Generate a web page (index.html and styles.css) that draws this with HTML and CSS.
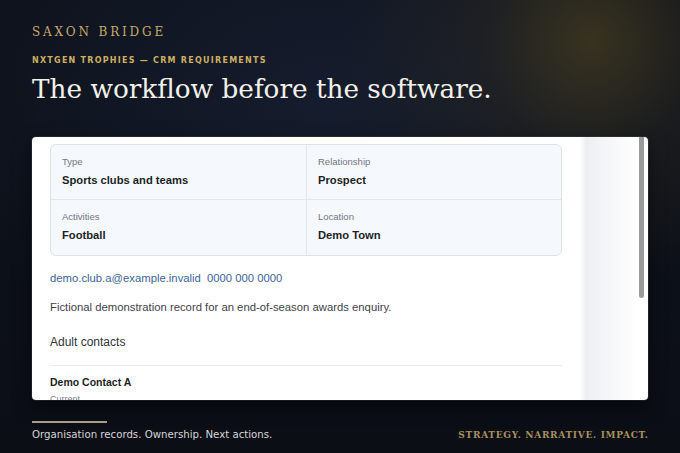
FILE: index.html
```html
<!DOCTYPE html>
<html lang="en">
<head>
<meta charset="utf-8">
<title>Saxon Bridge — NXTGEN Trophies CRM requirements</title>
<link rel="stylesheet" href="styles.css">
</head>
<body>
<div class="page">
  <header class="head">
    <div class="brand">SAXON BRIDGE</div>
    <div class="eyebrow">NXTGEN TROPHIES — CRM REQUIREMENTS</div>
    <h1 class="title">The workflow before the software.</h1>
  </header>

  <section class="panel">
    <div class="doc">
      <div class="facts">
        <div class="cell top">
          <div class="label">Type</div>
          <div class="value">Sports clubs and teams</div>
        </div>
        <div class="cell top right">
          <div class="label">Relationship</div>
          <div class="value">Prospect</div>
        </div>
        <div class="cell">
          <div class="label">Activities</div>
          <div class="value">Football</div>
        </div>
        <div class="cell right">
          <div class="label">Location</div>
          <div class="value">Demo Town</div>
        </div>
      </div>
      <div class="contact-line">
        <span class="link">demo.club.a@example.invalid</span>
        <span class="link">0000 000 0000</span>
      </div>
      <p class="desc">Fictional demonstration record for an end-of-season awards enquiry.</p>
      <h2 class="section">Adult contacts</h2>
      <div class="divider"></div>
      <div class="person">Demo Contact A</div>
      <div class="status">Current</div>
    </div>
    <div class="fade"></div>
    <div class="scroll"><div class="thumb"></div></div>
  </section>

  <footer class="foot">
    <div class="foot-left">
      <div class="rule"></div>
      <div class="tagline">Organisation records. Ownership. Next actions.</div>
    </div>
    <div class="motto">STRATEGY. NARRATIVE. IMPACT.</div>
  </footer>
</div>
</body>
</html>
```

FILE: styles.css
```css
* { box-sizing: border-box; }

html, body {
  margin: 0;
  padding: 0;
  width: 680px;
  height: 453px;
  overflow: hidden;
}

body {
  background:
    radial-gradient(circle at 87% 9%, rgba(96, 80, 30, 0.5) 0, rgba(70, 60, 32, 0.22) 110px, rgba(40, 38, 30, 0) 250px),
    radial-gradient(ellipse 420px 260px at 48% 22%, rgba(24, 32, 52, 0.75) 0, rgba(24, 32, 52, 0) 100%),
    linear-gradient(180deg, #0d111a 0, #0c1018 60%, #0b0e15 100%);
  font-family: "Liberation Sans", Arial, sans-serif;
}

.page {
  height: 453px;
  padding: 24px 32px 0;
  display: flex;
  flex-direction: column;
}

.brand {
  font-family: "DejaVu Serif", Georgia, serif;
  font-size: 12px;
  line-height: 16px;
  letter-spacing: 2.85px;
  color: #c6a96d;
}

.eyebrow {
  margin-top: 16px;
  font-family: "DejaVu Sans", Verdana, sans-serif;
  font-weight: 700;
  font-size: 8px;
  line-height: 10px;
  letter-spacing: 1.25px;
  color: #cfae62;
}

.title {
  margin: 6px 0 0;
  font-family: "DejaVu Serif", Georgia, serif;
  font-weight: 400;
  font-size: 26.3px;
  line-height: 34px;
  color: #f3f0e9;
}

.panel {
  margin-top: 31px;
  height: 263px;
  display: flex;
  background: #ffffff;
  border-radius: 4px;
  overflow: hidden;
  box-shadow: 0 0 0 1px rgba(255, 255, 255, 0.08), 0 6px 18px rgba(0, 0, 0, 0.5);
}

.doc {
  flex: 1;
  padding: 7px 18px 0;
  min-width: 0;
}

.facts {
  display: grid;
  grid-template-columns: 1fr 1fr;
  background: #f5f8fc;
  border: 1px solid #dce2ea;
  border-radius: 6px;
}

.cell {
  height: 55px;
  padding: 11px 11px 0;
}

.cell.top { border-bottom: 1px solid #e1e6ed; }
.cell.right { border-left: 1px solid #e1e6ed; }

.label {
  font-size: 9.5px;
  line-height: 12px;
  color: #707782;
}

.value {
  margin-top: 5px;
  font-size: 11.2px;
  line-height: 14px;
  font-weight: 700;
  color: #1c1f24;
}

.contact-line {
  margin-top: 14px;
  display: flex;
  gap: 6px;
  font-size: 11.3px;
  line-height: 16px;
}

.link { color: #3d6598; }

.desc {
  margin: 13px 0 0;
  font-size: 11.3px;
  line-height: 16px;
  color: #3f4349;
}

.section {
  margin: 19px 0 0;
  font-size: 12px;
  line-height: 16px;
  font-weight: 400;
  color: #30343a;
}

.divider {
  margin-top: 15px;
  height: 1px;
  background: #e8eaee;
}

.person {
  margin-top: 9px;
  font-size: 10.5px;
  line-height: 14px;
  font-weight: 700;
  color: #1c1f24;
}

.status {
  margin-top: 4px;
  font-size: 9px;
  line-height: 12px;
  color: #7a808a;
}

.fade {
  width: 58px;
  background: linear-gradient(90deg, #ffffff 0, #eceef2 6px, #f3f4f6 22px, #fbfbfc 44px, #ffffff 58px);
}

.scroll {
  width: 10px;
  padding-left: 1px;
}

.thumb {
  width: 5px;
  height: 161px;
  background: #9a9a9a;
  border-radius: 0 0 3px 3px;
}

.foot {
  margin-top: 21px;
  display: flex;
  justify-content: space-between;
  align-items: flex-end;
}

.rule {
  width: 75px;
  height: 2px;
  background: #a89d86;
}

.tagline {
  margin-top: 6px;
  font-family: "DejaVu Sans", Verdana, sans-serif;
  font-size: 10.2px;
  line-height: 12px;
  color: #d6d6d6;
}

.motto {
  font-family: "DejaVu Serif", Georgia, serif;
  font-weight: 700;
  font-size: 9px;
  line-height: 12px;
  letter-spacing: 0.7px;
  margin-right: -0.7px;
  color: #a8915c;
}
```
